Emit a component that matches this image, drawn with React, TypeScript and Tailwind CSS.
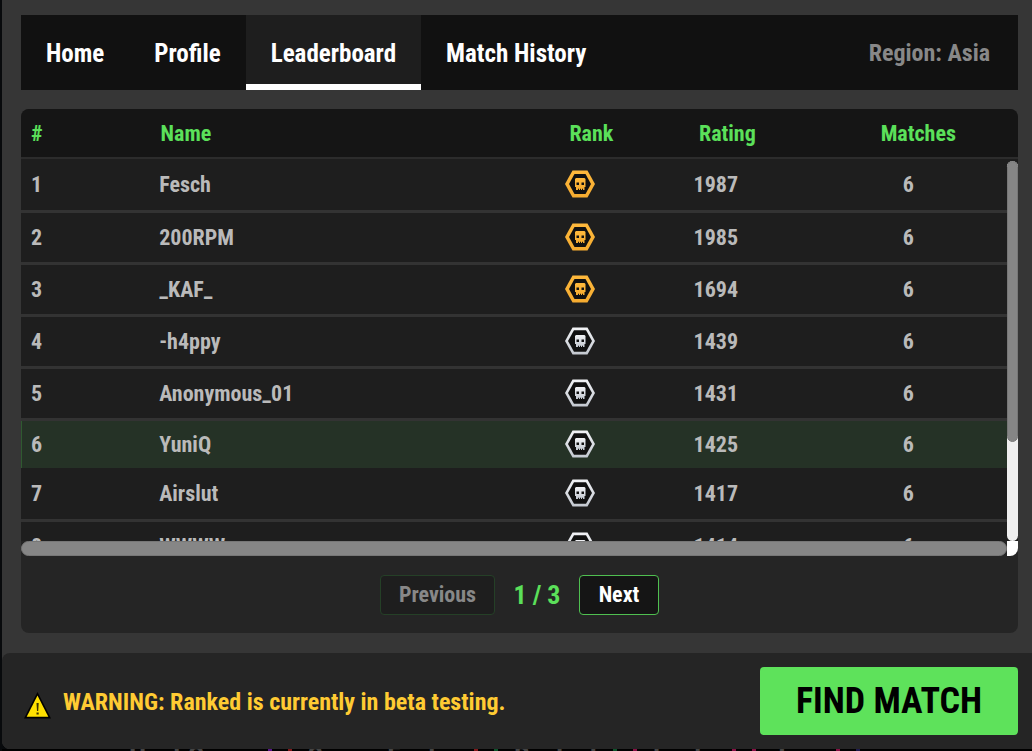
import React from "react";

type Tier = "gold" | "silver";

interface Player {
  place: number;
  name: string;
  tier: Tier;
  rating: number;
  matches: number;
  isSelf?: boolean;
}

const tabs = ["Home", "Profile", "Leaderboard", "Match History"];

const players: Player[] = [
  { place: 1, name: "Fesch", tier: "gold", rating: 1987, matches: 6 },
  { place: 2, name: "200RPM", tier: "gold", rating: 1985, matches: 6 },
  { place: 3, name: "_KAF_", tier: "gold", rating: 1694, matches: 6 },
  { place: 4, name: "-h4ppy", tier: "silver", rating: 1439, matches: 6 },
  { place: 5, name: "Anonymous_01", tier: "silver", rating: 1431, matches: 6 },
  { place: 6, name: "YuniQ", tier: "silver", rating: 1425, matches: 6, isSelf: true },
  { place: 7, name: "Airslut", tier: "silver", rating: 1417, matches: 6 },
  { place: 8, name: "WWWW", tier: "silver", rating: 1414, matches: 6 },
];

const menuLinks = [
  { label: "Host Game", dots: ["bg-purple-900", "bg-red-900"] },
  { label: "Server Finder", dots: ["bg-red-900", "bg-green-900"] },
  { label: "Ranked", dots: ["bg-green-900", "bg-pink-900"] },
  { label: "Invite", dots: ["bg-pink-900", "bg-pink-900"] },
  { label: "Join", dots: ["bg-pink-900", "bg-indigo-950"] },
];

const RankIcon: React.FC<{ tier: Tier }> = ({ tier }) => {
  const stops = tier === "gold" ? ["#ffb93c", "#f5ab30"] : ["#f2f3f6", "#c3c8d0"];
  const fill = `url(#rank-${tier})`;

  return (
    <svg width="30" height="28" viewBox="0 0 30 28" role="img" aria-label={`${tier} rank`}>
      <defs>
        <linearGradient id={`rank-${tier}`} x1="0" x2="0" y1="0" y2="1">
          <stop stopColor={stops[0]} />
          <stop offset="1" stopColor={stops[1]} />
        </linearGradient>
      </defs>
      <path d="M7.500 .5h15L30 14l-7.500 13.500h-15L0 14z" fill={fill} />
      <path
        d={
          tier === "gold"
            ? "M9.500 4h11l5.500 10-5.500 10h-11L4 14z"
            : "M9 3.200h12l6 10.800-6 10.800H9L3 14z"
        }
        fill="#111"
      />
      <path
        d="M11 8h8.500l1 1v8h-1v3H18v-1.200h-1V20h-1v-1.200h-1V20h-1v-1.200h-1V20h-2v-3h-1V9z"
        fill={fill}
      />
      <path d="M11.500 12.500H14V15h-2.500zM16.500 12.500H19V15h-2.500z" fill="#111" />
    </svg>
  );
};

const WarningIcon = () => (
  <svg width="27" height="27" viewBox="0 0 27 27" aria-hidden="true">
    <path d="M13.500 0L27 26.500H0z" fill="#000" />
    <path d="M13.500 3.500L24.300 24.800H2.700z" fill="#ffe000" />
    <path d="M12.500 11h2.200l-.5 8h-1.200zM12.500 20.500h2.200v2h-2.200z" fill="#3a3200" />
  </svg>
);

const Columns = () => (
  <colgroup>
    <col className="w-[13%]" />
    <col className="w-[41%]" />
    <col className="w-[13%]" />
    <col className="w-[13%]" />
    <col className="w-[20%]" />
  </colgroup>
);

export default function App() {
  return (
    <div className="flex h-screen flex-col overflow-hidden bg-[#080a0c] pl-0.5 font-['Roboto_Condensed',Roboto,sans-serif] font-bold">
      <main className="flex min-h-0 flex-1 flex-col rounded-bl-lg bg-[#363636]">
        <div className="flex min-h-0 flex-1 flex-col gap-[19px] pt-[15px] pr-3.5 pb-5 pl-[19px]">
          <nav className="flex h-[75px] shrink-0 items-stretch bg-[#111] text-[25px] text-white">
            {tabs.map((tab) => (
              <button
                key={tab}
                type="button"
                className={
                  tab === "Leaderboard"
                    ? "border-b-[6px] border-white bg-[#1e1e1e] px-[25px] pt-2"
                    : "px-[25px] pt-0.5"
                }
              >
                {tab}
              </button>
            ))}
            <span className="ml-auto self-center pr-7 text-2xl text-[#888]">Region: Asia</span>
          </nav>

          <section className="flex min-h-0 flex-1 flex-col overflow-hidden rounded-lg bg-[#252525]">
            <table className="w-full shrink-0 table-fixed text-left text-[22px]">
              <Columns />
              <thead>
                <tr className="h-[49px] border-b-2 border-[#2c2c2c] bg-[#151515] text-[#5be05a]">
                  <th className="px-2.5">#</th>
                  <th className="px-2.5">Name</th>
                  <th className="px-2.5">Rank</th>
                  <th className="px-2.5">Rating</th>
                  <th className="px-2.5 text-center">Matches</th>
                </tr>
              </thead>
            </table>

            <div className="flex min-h-0 flex-1">
              <div className="min-w-0 flex-1 overflow-hidden bg-[#1e1e1e]">
                <table className="w-full table-fixed text-[22px] text-[#bababa]">
                  <Columns />
                  <tbody>
                    {players.map((p) => (
                      <tr
                        key={p.place}
                        className={
                          p.isSelf
                            ? "h-[49px] bg-[#253226] shadow-[inset_1px_0_#2f5a30]"
                            : "h-[52px] border-b-[3px] border-[#333]"
                        }
                      >
                        <td className="px-2.5">{p.place}</td>
                        <td className="px-2.5">{p.name}</td>
                        <td className="px-3">
                          <span className="flex">
                            <RankIcon tier={p.tier} />
                          </span>
                        </td>
                        <td className="px-3">{p.rating}</td>
                        <td className="px-2.5 text-center">{p.matches}</td>
                      </tr>
                    ))}
                  </tbody>
                </table>
              </div>
              <div className="flex w-[11px] flex-col bg-[#1e1e1e] pt-0.5">
                <div className="flex-1 rounded-full bg-[#efefef]">
                  <div className="h-[74%] rounded-full border border-[#777] bg-[#868686]" />
                </div>
              </div>
            </div>
            <div className="flex h-[15px] shrink-0">
              <div className="flex-1 rounded-full border border-[#777] bg-[#868686]" />
              <div className="w-[11px] rounded-br-lg bg-white" />
            </div>

            <div className="flex h-[77px] shrink-0 items-center justify-center text-[22px]">
              <button
                type="button"
                disabled
                className="h-10 w-[115px] rounded border border-[#254027] bg-[#1e1e1e] text-[#888]"
              >
                Previous
              </button>
              <span className="w-[84px] pt-0.5 text-center text-[26px] text-[#5be05a]">1 / 3</span>
              <button
                type="button"
                className="h-10 w-20 rounded border border-[#4fbf50] bg-[#151515] text-white"
              >
                Next
              </button>
            </div>
          </section>
        </div>

        <footer className="flex h-24 shrink-0 items-center rounded-l-lg bg-[#252525] pr-3.5 pl-[22px]">
          <span className="pt-2">
            <WarningIcon />
          </span>
          <p className="pt-0.5 pl-3 text-2xl text-[#ffcb33]">
            WARNING: Ranked is currently in beta testing.
          </p>
          <button
            type="button"
            className="ml-auto h-[68px] w-[258px] rounded bg-[#5ee25b] text-4xl text-black"
          >
            FIND MATCH
          </button>
        </footer>
      </main>

      <div className="flex h-0.5 shrink-0 items-start gap-4 overflow-hidden bg-black pl-[127px] text-[28px] leading-4 text-[#444]">
        {menuLinks.map((link) => (
          <React.Fragment key={link.label}>
            <a href="#" className="shrink-0">
              {link.label}
            </a>
            <span className={`h-1 w-1 ${link.dots[0]}`} />
            <span className={`h-1 w-1 ${link.dots[1]}`} />
          </React.Fragment>
        ))}
      </div>
    </div>
  );
}
